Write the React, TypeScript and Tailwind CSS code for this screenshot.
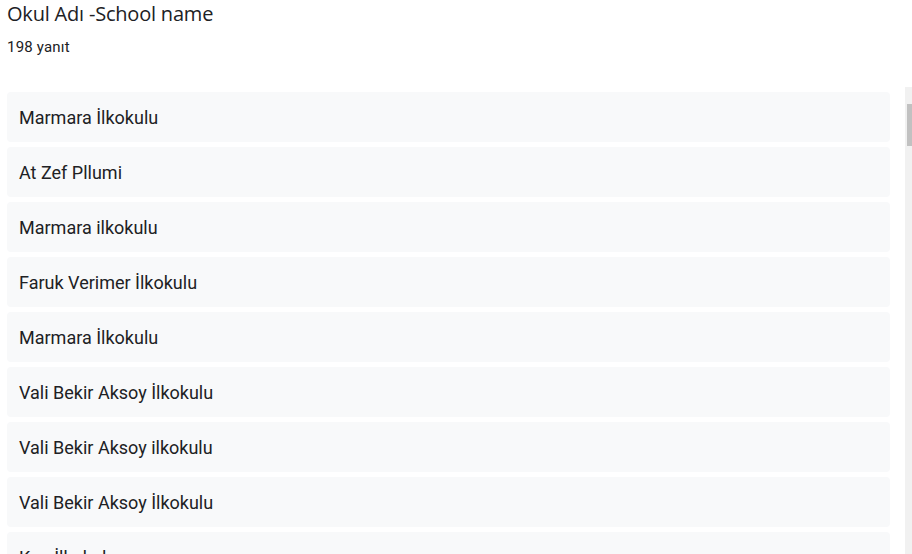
const answers = [
  "Marmara İlkokulu",
  "At Zef Pllumi",
  "Marmara ilkokulu",
  "Faruk Verimer İlkokulu",
  "Marmara İlkokulu",
  "Vali Bekir Aksoy İlkokulu",
  "Vali Bekir Aksoy ilkokulu",
  "Vali Bekir Aksoy İlkokulu",
  "Koç İlkokulu",
  "Marmara İlkokulu",
];

export default function App() {
  return (
    <div className="h-[554px] w-[912px] overflow-hidden bg-white font-['Roboto',sans-serif] text-[#202124]">
      <div className="px-[7px] pt-[2px]">
        <div className="font-['Open_Sans',sans-serif] text-[20px] leading-[24px] tracking-[-0.2px]">
          Okul Adı -School name
        </div>
        <div className="mt-[11px] text-[15px] leading-[20px] tracking-[0.2px]">198 yanıt</div>
      </div>
      <div className="mt-[30px] flex h-[500px]">
        <div className="flex flex-1 flex-col gap-[5px] overflow-hidden pl-[7px] pr-[15px] pt-[5px]">
          {answers.map((a, i) => (
            <div
              key={i}
              className="flex h-[50px] shrink-0 items-center rounded-[4px] bg-[#f8f9fa] px-[12px] text-[18px]"
            >
              {a}
            </div>
          ))}
        </div>
        <div className="w-[7px] shrink-0 bg-[#f1f1f1] pt-[17px]">
          <div className="ml-[2px] h-[42px] bg-[#c1c1c1]" />
        </div>
      </div>
    </div>
  );
}
